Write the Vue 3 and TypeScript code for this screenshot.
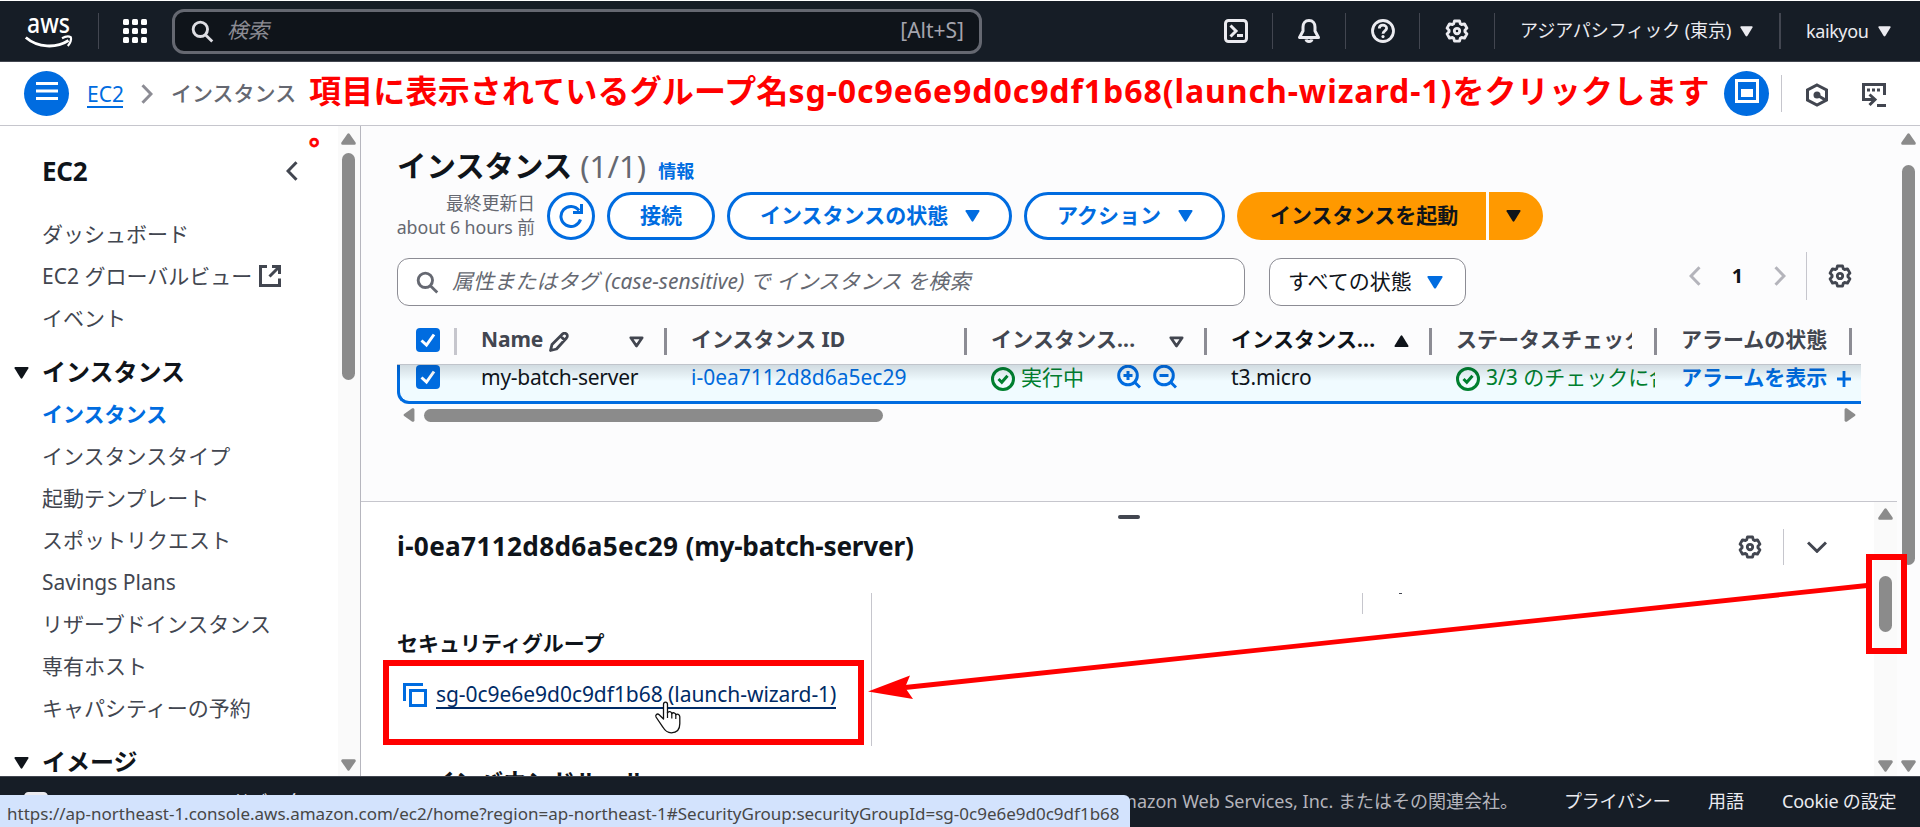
<script setup lang="ts">
interface NavItem { label: string; kind: 'entry' | 'head' | 'active'; external?: boolean }

const nav: NavItem[] = [
  { label: 'ダッシュボード', kind: 'entry' },
  { label: 'EC2 グローバルビュー', kind: 'entry', external: true },
  { label: 'イベント', kind: 'entry' },
  { label: 'インスタンス', kind: 'head' },
  { label: 'インスタンス', kind: 'active' },
  { label: 'インスタンスタイプ', kind: 'entry' },
  { label: '起動テンプレート', kind: 'entry' },
  { label: 'スポットリクエスト', kind: 'entry' },
  { label: 'Savings Plans', kind: 'entry' },
  { label: 'リザーブドインスタンス', kind: 'entry' },
  { label: '専有ホスト', kind: 'entry' },
  { label: 'キャパシティーの予約', kind: 'entry' },
  { label: 'イメージ', kind: 'head' },
]

// Six-toothed cog outline in a 16x16 box.
function gear(): string {
  const pts: string[] = []
  for (let i = 0; i < 6; i++) {
    const base = -90 + i * 60
    const steps: [number, number][] = [[-25, 5.3], [-14, 6.9], [14, 6.9], [25, 5.3]]
    for (const [d, r] of steps) {
      const a = ((base + d) * Math.PI) / 180
      pts.push(`${(8 + r * Math.cos(a)).toFixed(2)} ${(8 + r * Math.sin(a)).toFixed(2)}`)
    }
  }
  return `M${pts.join('L')}Z`
}
const gearPath = gear()
</script>

<template>
  <div class="page">
    <svg class="defs" aria-hidden="true">
      <symbol id="i-search" viewBox="0 0 16 16"><g fill="none" stroke="currentColor" stroke-width="2"><ellipse cx="6.5" cy="6.5" rx="5" ry="5" /><path d="M10 10.3 14.8 15" /></g></symbol>
      <symbol id="i-gear" viewBox="0 0 16 16"><g fill="none" stroke="currentColor" stroke-width="1.9" stroke-linejoin="round"><path :d="gearPath" /><circle cx="8" cy="8" r="1.8" /></g></symbol>
      <symbol id="i-down" viewBox="0 0 16 13"><path d="M1.2 0H14.8Q16 .3 15.4 1.6L9 12Q8 13.200 7 12L.6 1.600Q0 .3 1.200 0Z" fill="currentColor" /></symbol>
      <symbol id="i-check" viewBox="0 0 16 16"><g fill="none" stroke="currentColor" stroke-width="2"><circle cx="8" cy="8" r="7" /><path d="M5 8l2.200 2.200L11 5.800" /></g></symbol>
      <symbol id="i-left" viewBox="0 0 12 20"><path d="M10.500 1.200 2 10l8.500 8.800" fill="none" stroke="currentColor" stroke-width="3" /></symbol>
      <symbol id="i-box" viewBox="0 0 24 24"><rect width="24" height="24" rx="4" fill="#006ce0" /><path d="M5.500 12.500 10.500 17 18 6.500" fill="none" stroke="#fff" stroke-width="3" /></symbol>
      <symbol id="i-tri" viewBox="0 0 16 12"><path d="M2 1.500H14L8 10.200Z" fill="none" stroke="currentColor" stroke-width="3" stroke-linejoin="round" /></symbol>
      <symbol id="i-sbar" viewBox="0 0 15 12"><path d="M6.500.8Q7.500-.5 8.500.8L14.600 9.500Q15.200 11.500 13.500 11.800H1.500Q-.2 11.500.4 9.500Z" fill="#8b8b8b" /></symbol>
    </svg>

    <header class="top">
      <svg class="aws" viewBox="0 0 48 34"><text class="awst" x="2" y="19" textLength="43" lengthAdjust="spacingAndGlyphs">aws</text><path d="M.8 23.500C13 34 31 34.500 43.500 26.500" fill="none" stroke="#fff" stroke-width="2.800" /><path d="M37 24.200c3-1.600 7-2 8.800-1 .8 2-.4 6-3 8.800" fill="none" stroke="#fff" stroke-width="2.200" /></svg>
      <i class="vd v1" />
      <div class="apps"><i v-for="n in 9" :key="n" /></div>
      <div class="gsearch">
        <svg class="s22"><use href="#i-search" /></svg>
        <span class="ph">検索</span>
        <span class="alt">[Alt+S]</span>
      </div>
      <svg class="ic shell" viewBox="0 0 24 24"><g fill="none" stroke="currentColor" stroke-width="3"><rect x="1.500" y="1.500" width="21" height="21" rx="3" /><path d="M6.500 6.500 12 12l-5.500 5.500M13 16.500h6" /></g></svg>
      <i class="vd v2" />
      <svg class="ic bell" viewBox="0 0 24 24"><g fill="none" stroke="currentColor" stroke-width="3" stroke-linejoin="round"><path d="M12 1.500c-4 0-6 3-6 6.500v4L2.500 18.500h19L18 12V8c0-3.500-2-6.500-6-6.500Z" /><path d="M9 20.500c.5 2.500 5.500 2.500 6 0" /></g></svg>
      <i class="vd v3" />
      <svg class="ic help" viewBox="0 0 24 24"><g fill="none" stroke="currentColor" stroke-width="2.800"><circle cx="12" cy="12" r="10.500" /><path d="M8.300 9.600C8.300 5 15.700 5.200 15.600 9.400 15.500 12 12 11.800 12 14.800" /></g><circle cx="12" cy="17.600" r="1.600" fill="currentColor" /></svg>
      <i class="vd v3" />
      <svg class="ic gear1"><use href="#i-gear" /></svg>
      <i class="vd v3" />
      <span class="region">アジアパシフィック (東京)</span>
      <svg class="dn"><use href="#i-down" /></svg>
      <i class="vd v4" />
      <span class="user">kaikyou</span>
      <svg class="dn"><use href="#i-down" /></svg>
    </header>

    <div class="crumbs">
      <div class="round"><svg viewBox="0 0 22 18"><path d="M0 1.500h22M0 9h22M0 16.500h22" stroke="#fff" stroke-width="3" /></svg></div>
      <a class="ec2">EC2</a>
      <svg class="chev flip"><use href="#i-left" /></svg>
      <span class="here">インスタンス</span>
      <div class="round r2"><svg viewBox="0 0 24 24"><rect x="1.500" y="1.500" width="21" height="21" fill="none" stroke="#fff" stroke-width="3" /><rect x="6" y="10" width="12" height="8" fill="#fff" /></svg></div>
      <i class="cd" />
      <svg class="hex" viewBox="0 0 24 24"><path d="M12 2 21.500 7v10L12 22 2.500 17V7Z" fill="none" stroke="currentColor" stroke-width="3" /><circle cx="12" cy="12" r="3.500" fill="currentColor" /><path d="M12 12l8.500 5" stroke="currentColor" stroke-width="3" /></svg>
      <svg class="cs" viewBox="0 0 25 25"><g fill="none" stroke="currentColor" stroke-width="3"><path d="M22.500 12V1.500H1.500v15H12" /><path d="M7.500 11.500l5.500 5-5.500 5.500" /><path d="M15 22.500h9" /></g><path d="M5 5.500h3v3H5zM10 5.500h3v3h-3zM15 5.500h3v3h-3z" fill="currentColor" /></svg>
    </div>

    <div class="body">
      <aside class="side">
        <div class="sidein">
          <div class="sidehead"><b>EC2</b><svg><use href="#i-left" /></svg></div>
          <div v-for="(n, i) in nav" :key="i" class="nav" :class="n.kind">
            <svg v-if="n.kind === 'head'" class="caret"><use href="#i-down" /></svg>
            <span>{{ n.label }}</span>
            <svg v-if="n.external" class="ext" viewBox="0 0 22 22"><g fill="none" stroke="currentColor" stroke-width="3"><path d="M8 1.500H1.500v19h19V13.500" /><path d="M13 1.500h7.500V9M20 2 10.500 11.500" /></g></svg>
          </div>
        </div>
        <div class="track"><svg class="sa"><use href="#i-sbar" /></svg><i class="thumb th1" /><svg class="sa dnw"><use href="#i-sbar" /></svg></div>
      </aside>

      <main class="main">
        <div class="upper">
          <div class="content">
            <h1><span>インスタンス</span><span class="cnt">(1/1)</span><a>情報</a></h1>
            <div class="actions">
              <div class="updated"><span>最終更新日</span><span class="abt">about 6 hours 前</span></div>
              <button class="refresh"><svg viewBox="0 0 24 24"><g fill="none" stroke="currentColor" stroke-width="3"><path d="M21.500 15.500A10 10 0 1 1 20 6.500" /><path d="M22.500 0v8.500H14" /></g></svg></button>
              <button class="b1"><span>接続</span></button>
              <button class="b2"><span>インスタンスの状態</span><svg><use href="#i-down" /></svg></button>
              <button class="b3"><span>アクション</span><svg><use href="#i-down" /></svg></button>
              <button class="b4"><span>インスタンスを起動</span></button>
              <button class="b5"><svg><use href="#i-down" /></svg></button>
            </div>
            <div class="filters">
              <div class="find"><svg><use href="#i-search" /></svg><span>属性またはタグ (case-sensitive) で インスタンス を検索</span></div>
              <div class="state"><span>すべての状態</span><svg><use href="#i-down" /></svg></div>
              <div class="pager">
                <svg class="pl"><use href="#i-left" /></svg><b>1</b><svg class="pl flip"><use href="#i-left" /></svg>
                <i /><svg class="pg"><use href="#i-gear" /></svg>
              </div>
            </div>
            <div class="thead">
              <div class="c0"><svg class="cb"><use href="#i-box" /></svg></div>
              <div class="c1"><span class="name">Name</span><svg class="pen" viewBox="0 0 20 20"><path d="M1.500 18.500 3 12.500 13.500 2a2.500 2.500 0 0 1 4 4L7.500 17ZM11.500 4l4.500 4.500" fill="none" stroke="currentColor" stroke-width="2.800" stroke-linejoin="round" /></svg><svg class="srt"><use href="#i-tri" /></svg></div>
              <div class="c2"><span>インスタンス ID</span></div>
              <div class="c3"><span class="dots">インスタンス...</span><svg class="srt"><use href="#i-tri" /></svg></div>
              <div class="c4"><span class="dots">インスタンス...</span><svg class="srt up"><use href="#i-down" /></svg></div>
              <div class="c5"><span class="clip">ステータスチェック</span></div>
              <div class="c6"><span>アラームの状態</span></div>
            </div>
            <div class="rowwrap">
              <div class="row">
                <div class="c0"><svg class="cb"><use href="#i-box" /></svg></div>
                <div class="c1"><span class="srv">my-batch-server</span></div>
                <div class="c2"><a class="iid">i-0ea7112d8d6a5ec29</a></div>
                <div class="c3 ok"><svg class="ck"><use href="#i-check" /></svg><span>実行中</span>
                  <svg class="zm z1" viewBox="0 0 24 24"><g fill="none" stroke="currentColor" stroke-width="3"><circle cx="11" cy="10.500" r="9.300" /><path d="M17.500 17l5.500 5.500M6.500 10.500h9M11 6v9" /></g></svg>
                  <svg class="zm" viewBox="0 0 24 24"><g fill="none" stroke="currentColor" stroke-width="3"><circle cx="11" cy="10.500" r="9.300" /><path d="M17.500 17l5.500 5.500M6.500 10.500h9" /></g></svg>
                </div>
                <div class="c4"><span class="t3">t3.micro</span></div>
                <div class="c5 ok"><svg class="ck"><use href="#i-check" /></svg><span class="clip2">3/3 のチェックに合格しました</span></div>
                <div class="c6"><a class="al">アラームを表示</a><svg class="plus" viewBox="0 0 14 18"><path d="M0 9h14M7 1v16" stroke="currentColor" stroke-width="2.800" /></svg></div>
              </div>
            </div>
            <div class="hbar"><svg class="ha hl"><use href="#i-sbar" /></svg><i /><svg class="ha hr"><use href="#i-sbar" /></svg></div>
          </div>
        </div>

        <section class="panel">
          <div class="pin">
            <i class="grip" />
            <div class="phead">
              <h2><span class="pid">i-0ea7112d8d6a5ec29 </span><span class="pname">(my-batch-server)</span></h2>
              <svg class="pgear"><use href="#i-gear" /></svg><i /><svg class="pdn" viewBox="0 0 20 12"><path d="M1 1.500l9 8.800 9-8.800" fill="none" stroke="currentColor" stroke-width="3" /></svg>
            </div>
            <div class="details">
              <div class="col">
                <b class="sg">セキュリティグループ</b>
                <div class="link"><svg viewBox="0 0 24 24"><path d="M1.500 18V1.500H20" fill="none" stroke="currentColor" stroke-width="3" /><rect x="7.500" y="7.500" width="15" height="15" fill="none" stroke="currentColor" stroke-width="3" /></svg><a>sg-0c9e6e9d0c9df1b68 (launch-wizard-1)</a></div>
              </div>
              <div class="col2" />
              <i class="dot" />
            </div>
            <div class="inb"><b>インバウンドルール</b></div>
          </div>
          <div class="track ptrack"><svg class="sa"><use href="#i-sbar" /></svg><i class="thumb th2" /><svg class="sa dnw"><use href="#i-sbar" /></svg></div>
        </section>
      </main>
      <div class="mtrack"><svg class="sa"><use href="#i-sbar" /></svg><i class="thumb th3" /><svg class="sa dnw"><use href="#i-sbar" /></svg></div>
    </div>

    <footer class="foot">
      <svg class="fic" viewBox="0 0 24 24"><rect x="1.500" y="1.500" width="21" height="21" rx="3" fill="none" stroke="#ebebf0" stroke-width="3" /></svg>
      <span class="fb">フィードバック</span>
      <span class="copy">© 2025, Amazon Web Services, Inc. またはその関連会社。</span>
      <a class="f1">プライバシー</a><a class="f2">用語</a><a class="f3">Cookie の設定</a>
    </footer>

    <div class="status">https://ap-northeast-1.console.aws.amazon.com/ec2/home?region=ap-northeast-1#SecurityGroup:securityGroupId=sg-0c9e6e9d0c9df1b68</div>

    <p class="note">項目に表示されているグループ名<em>sg-0c9e6e9d0c9df1b68(launch-wizard-1)</em>をクリックします<br /><small>。</small></p>
    <svg class="marks" viewBox="0 0 1920 827">
      <rect x="386" y="663" width="475" height="79" fill="none" stroke="#f00" stroke-width="6" />
      <rect x="1869" y="557" width="35" height="94" fill="none" stroke="#f00" stroke-width="6" />
      <path d="M1867 585.500 905 687.500" stroke="#f00" stroke-width="4.800" />
      <path d="M868 691.500 910 675.500 905 687.500 913 699Z" fill="#f00" />
      <path d="M663.500 719V704.500c0-3.200 4-3.200 4 0V713c1-2.200 4.200-1.800 4.300.8 1-1.800 3.800-1.200 4 1 1.200-1.400 4-.6 4 2v7c0 6-3.500 9-8.500 9-4 0-6.300-2-8.300-5.500L656 717c-1-2.600 1.500-3.800 3.200-2.200Z" fill="#fff" stroke="#111" stroke-width="1.300" stroke-linejoin="round" />
      <path d="M667.500 712v6M671.800 713.500v5M675.800 714.500v4.500" stroke="#111" stroke-width="1.200" />
    </svg>
  </div>
</template>

<style>
html, body { margin: 0; background: #fff; overflow: hidden; }
</style>
<style scoped>
.page { position: relative; width: 1920px; height: 827px; overflow: hidden; display: flex; flex-direction: column; font-family: "Noto Sans", "Noto Sans CJK JP", sans-serif; font-size: 21px; line-height: 30px; color: #0f141a; background: #fff; }
.page * { box-sizing: border-box; }
svg { display: block; flex: none; }
i { flex: none; display: block; font-style: normal; }
span, b, a { white-space: nowrap; flex: none; }
.defs { position: absolute; width: 0; height: 0; }
.flip { transform: scaleX(-1); }

.top { height: 62px; flex: none; border-top: 1px solid #fff; border-bottom: 1px solid #424650; background: #161d26; display: flex; align-items: center; color: #ebebf0; }
.aws { width: 48px; height: 34px; margin-left: 25px; overflow: visible; }
.awst { font: 500 27px "Noto Sans", sans-serif; fill: #fff; }
.vd { width: 1px; height: 36px; background: #424650; }
.v1 { margin-left: 25px; }
.apps { display: grid; grid-template-columns: repeat(3, 6px); gap: 3px; margin-left: 24px; }
.apps i { height: 6px; border-radius: 1.500px; background: #fff; }
.gsearch { margin-left: 25px; width: 810px; height: 45px; border: 3px solid #656871; border-radius: 12px; background: #0f141a; display: flex; align-items: center; }
.s22 { width: 23px; height: 23px; margin-left: 16px; color: #dedee3; }
.ph { margin-left: 13px; margin-top: -2px; font-style: italic; color: #8c8c94; }
.alt { margin-left: auto; margin-right: 15px; margin-top: -2px; color: #a4a4ad; font-size: 21px; }
.ic { width: 24px; height: 24px; }
.shell { margin-left: 242px; }
.v2 { margin-left: 24px; }
.v3 { margin-left: 24px; }
.bell { margin-left: 24px; }
.help, .gear1 { margin-left: 25px; }
.gear1 { margin-right: 1px; }
.region { margin-left: 25px; width: 211px; font-size: 18px; letter-spacing: -.05px; margin-top: -2px; }
.dn { width: 13px; height: 11px; margin-left: 9px; }
.v4 { width: 2px; margin-left: 26px; }
.user { margin-left: 25px; width: 63px; font-size: 18px; letter-spacing: -.4px; margin-top: -1px; }

.crumbs { height: 64px; flex: none; border-bottom: 1px solid #c6c6cd; display: flex; align-items: center; padding-left: 24px; color: #424650; }
.round { width: 45px; height: 45px; border-radius: 50%; background: #006ce0; display: flex; justify-content: center; padding-top: 11px; flex: none; }
.round svg { width: 22px; height: 18px; }
.ec2 { margin-left: 18px; width: 36px; color: #006ce0; line-height: 24px; border-bottom: 2px solid #006ce0; margin-top: 3px; }
.chev { width: 12px; height: 20px; color: #8c8c94; margin-left: 18px; }
.here { margin-left: 18px; width: 126px; font-weight: 500; color: #656871; margin-top: -2px; }
.r2 { margin-left: 1427px; padding-top: 8px; }
.r2 svg { width: 24px; height: 24px; }
.cd { width: 1px; height: 37px; background: #c6c6cd; margin-left: 12px; }
.hex { width: 24px; height: 24px; margin-left: 23px; margin-top: 3px; }
.cs { width: 25px; height: 25px; margin-left: 33px; margin-top: 3px; }

.body { height: 650px; flex: none; display: flex; }
.side { width: 361px; border-right: 1px solid #b6b6be; display: flex; flex: none; overflow: hidden; }
.sidein { width: 338px; padding-left: 42px; }
.sidehead { display: flex; align-items: center; height: 36px; margin: 27px 0 24px; font-size: 26px; justify-content: space-between; padding-right: 40px; }
.sidehead svg { width: 12px; height: 20px; color: #424650; }
.sidehead b { letter-spacing: -.3px; }
.nav { height: 42px; display: flex; align-items: center; color: #424650; }
.nav.head { height: 43px; margin: 11px 0 0 -28px; font-size: 24px; font-weight: 700; color: #0f141a; }
.nav.active { color: #006ce0; font-weight: 700; }
.caret { width: 15px; height: 12px; margin-right: 13px; margin-top: 2px; }
.ext { width: 22px; height: 22px; margin-left: 7px; }
.track { width: 22px; background: #fafafa; display: flex; flex-direction: column; align-items: center; padding-right: 1px; height: 650px; }
.sa { width: 15px; height: 12px; margin-top: 7px; }
.thumb { width: 13px; border-radius: 7px; background: #8b8b8b; }
.th1 { height: 227px; margin-top: 8px; }
.dnw { transform: scaleY(-1); margin-top: auto; margin-bottom: 5px; }

.main { width: 1536px; flex: none; display: flex; flex-direction: column; background: #fcfcfd; }
.upper { height: 375px; flex: none; }
.content { padding-left: 36px; }
h1 { margin: 0; padding-top: 17px; height: 66px; display: flex; font-size: 29.400px; line-height: 46px; font-weight: 700; }
.cnt { font-weight: 400; color: #656871; margin-left: 8px; font-size: 31px; letter-spacing: .1px; }
h1 a { font-size: 18px; font-weight: 700; color: #006ce0; margin-left: 12px; padding-top: 5px; }
.actions { display: flex; height: 48px; }
.updated { width: 138px; display: flex; flex-direction: column; align-items: flex-end; font-size: 17.800px; line-height: 24px; color: #656871; margin-top: -1px; }
.abt { letter-spacing: -.08px; }
button { font: inherit; font-weight: 700; background: #fff; border: 3px solid #006ce0; border-radius: 24px; color: #006ce0; height: 48px; padding: 0; display: flex; align-items: center; flex: none; }
button span { margin-top: -3px; }
.refresh { width: 48px; margin-left: 12px; padding-left: 9px; }
.refresh svg { width: 24px; height: 24px; }
.b1 { width: 108px; margin-left: 12px; justify-content: center; }
.b2 { width: 285px; margin-left: 12px; padding-left: 30px; }
.b2 svg, .b3 svg, .b5 svg { width: 15px; height: 12px; margin-left: 17px; }
.b3 { width: 201px; margin-left: 12px; padding-left: 30px; }
.b4 { width: 249px; margin-left: 12px; border: 0; background: #ff9900; color: #0f141a; border-radius: 24px 0 0 24px; padding-left: 33px; }
.b5 { width: 54px; margin-left: 3px; border: 0; background: #ff9900; color: #0f141a; border-radius: 0 24px 24px 0; }
.b5 svg { margin-left: 17px; }
.filters { display: flex; margin-top: 18px; height: 48px; }
.find { width: 848px; border: 1px solid #8c8c94; border-radius: 12px; background: #fff; display: flex; align-items: center; color: #656871; font-style: italic; }
.find svg { width: 23px; height: 23px; margin: 0 14px 0 18px; }
.find span { margin: -2px 0 0 -1px; letter-spacing: .05px; }
.state { width: 197px; margin-left: 24px; border: 1px solid #8c8c94; border-radius: 12px; background: #fff; display: flex; align-items: center; padding-left: 19px; }
.state span { margin: -3px 0 0 -1px; }
.state svg { width: 16px; height: 13px; color: #006ce0; margin-left: 15px; }
.pager { display: flex; align-items: center; height: 48px; margin-top: -6px; margin-left: 223px; }
.pl { width: 12px; height: 20px; color: #b4b4bb; }
.pager b { width: 73px; text-align: center; font-size: 20px; }
.pager i { width: 1px; height: 48px; background: #c6c6cd; margin-left: 20px; }
.pg { width: 24px; height: 24px; color: #424650; margin-left: 21px; }
.thead { height: 58px; width: 1464px; display: flex; align-items: flex-start; padding-top: 22px; font-weight: 700; color: #424650; }
.thead > div { height: 27px; display: flex; align-items: center; border-right: 3px solid #8c8c94; }
.thead span { margin-top: -5px; }
.thead > .c0 { border-color: #c6c6cd; align-items: flex-start; }
.c0 { width: 60px; padding-left: 19px; }
.cb { width: 24px; height: 24px; }
.c1 { width: 210px; padding-left: 24px; }
.c2 { width: 300px; padding-left: 24px; }
.c3 { width: 240px; padding-left: 24px; }
.c4 { width: 225px; padding-left: 24px; }
.c5 { width: 225px; padding-left: 24px; }
.c6 { width: 195px; padding-left: 24px; }
.name { letter-spacing: -.1px; }
.dots { letter-spacing: .15px; }
.pen { width: 20px; height: 20px; margin-left: 6px; margin-top: 1px; }
.srt { width: 15px; height: 12px; margin-left: auto; margin-right: 20px; }
.c4 { color: #0f141a; }
.c4 .srt { margin-right: 20px; margin-top: -1px; }
.up { transform: scaleY(-1); }
.clip { width: 176px; overflow: hidden; }
.rowwrap { height: 41px; overflow: hidden; border-top: 1px solid #c0c4cb; width: 1464px; position: relative; }
.rowwrap::after { content: ""; position: absolute; inset: 0 0 auto 0; height: 16px; background: linear-gradient(rgba(0, 7, 22, .13), rgba(0, 7, 22, 0)); }
.row { height: 39px; border-left: 3px solid #006ce0; border-bottom: 3px solid #006ce0; border-radius: 0 0 0 12px; background: #f0fbff; display: flex; align-items: flex-start; }
.row > div { display: flex; align-items: center; height: 27px; flex: none; }
.row span, .row a { margin-top: -3px; }
.row .c0 { width: 57px; padding-left: 16px; align-items: flex-start; }
.row a { color: #006ce0; }
.row .al { font-weight: 700; }
.srv { letter-spacing: -.25px; }
.t3 { letter-spacing: -.1px; }
.ok { color: #00802f; }
.ck { width: 24px; height: 24px; margin: 1px 6px 0 0; }
.c5 .ck { margin-top: 0; }
.zm { width: 24px; height: 24px; color: #006ce0; margin-left: 12px; margin-top: -3px; }
.z1 { margin-left: 33px; }
.clip2 { width: 169px; overflow: hidden; }
.plus { width: 14px; height: 18px; color: #006ce0; margin-left: 10px; }
.hbar { display: flex; align-items: center; height: 14px; margin-top: 3px; }
.ha { width: 14px; height: 12px; }
.hl { transform: rotate(-90deg); margin-left: 5px; }
.hbar i { width: 459px; height: 13px; border-radius: 7px; background: #8b8b8b; margin-left: 8px; }
.hr { transform: rotate(90deg); margin-left: 960px; }

.panel { height: 275px; flex: none; border-top: 1px solid #c6c6cd; background: #fff; display: flex; overflow: hidden; }
.pin { width: 1513px; padding-left: 36px; display: flex; flex-direction: column; }
.grip { width: 22px; height: 4px; border-radius: 2px; background: #424650; margin: 13px 0 0 721px; }
.phead { display: flex; align-items: center; height: 36px; margin-top: 10px; color: #424650; }
h2 { margin: -2px 0 0; font-size: 26.200px; width: 1341px; color: #0f141a; line-height: 36px; }
.pid { letter-spacing: .32px; white-space: pre; }
.pname { letter-spacing: -.22px; }
.pgear { width: 24px; height: 24px; }
.phead i { width: 1px; height: 36px; background: #c6c6cd; margin-left: 21px; }
.pdn { width: 20px; height: 12px; margin-left: 23px; }
.details { display: flex; margin-top: 28px; }
.col { width: 475px; height: 153px; border-right: 1px solid #c6c6cd; padding-top: 35px; }
.sg { display: block; font-weight: 700; }
.link { display: flex; align-items: center; margin: 21px 0 0 6px; height: 32px; color: #006ce0; }
.link svg { width: 24px; height: 24px; }
.link a { color: #002b66; margin-left: 9px; line-height: 26px; border-bottom: 2px solid #002b66; letter-spacing: -.05px; }
.col2 { width: 491px; height: 21px; border-right: 1px solid #c6c6cd; }
.dot { width: 3px; height: 1px; background: #424650; margin-left: 36px; }
.inb { margin: 21px 0 0 34px; height: 30px; font-size: 24px; flex: none; }
.ptrack { width: 23px; height: 274px; padding: 0; }
.ptrack .sa { margin-top: 6px; }
.th2 { height: 56px; margin-top: 56px; }
.panel .dnw, .mtrack .dnw { margin-top: auto; margin-bottom: 4px; }
.mtrack { width: 23px; background: #fcfcfd; display: flex; flex-direction: column; align-items: center; height: 650px; }
.th3 { height: 400px; margin-top: 20px; }

.foot { height: 51px; flex: none; background: #161d26; border-top: 1px solid #424650; display: flex; align-items: center; color: #ebebf0; font-size: 18px; padding-bottom: 2px; }
.fic { width: 24px; height: 24px; margin-left: 24px; margin-top: 6px; }
.fb { margin-left: 130px; width: 130px; }
.copy { width: 500px; margin-left: 710px; text-align: right; color: #b4b4bb; }
.f1 { margin-left: 46px; width: 105px; letter-spacing: -.2px; }
.f2 { margin-left: 39px; width: 36px; }
.f3 { margin-left: 38px; letter-spacing: -.2px; }

.status { position: absolute; left: 0; bottom: 0; width: 1130px; height: 32px; padding: 4px 0 0 7px; background: #d3e3fd; border-radius: 0 6px 0 0; font: 17px/30px "Noto Sans", sans-serif; color: #474747; white-space: nowrap; }
.note { position: absolute; left: 309px; top: 69px; margin: 0; font-size: 32px; line-height: 44px; font-weight: 700; letter-spacing: .16px; color: #f00; white-space: nowrap; }
.note em { font-style: normal; letter-spacing: .93px; }
.note small { font-size: 27px; display: block; -webkit-text-stroke: .8px #f00; }
.marks { position: absolute; left: 0; top: 0; width: 1920px; height: 827px; }
</style>
